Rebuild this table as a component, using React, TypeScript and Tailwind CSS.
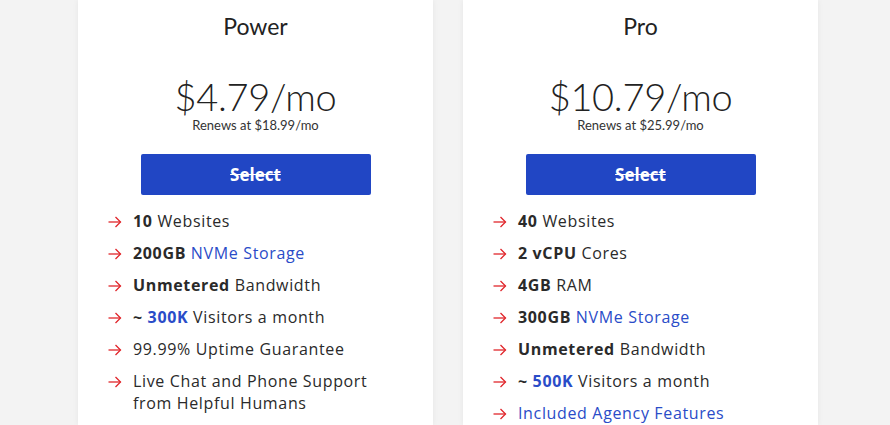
import React from "react";

type Feat = { parts: { t: string; b?: boolean; blue?: boolean }[] };

const Arrow = () => (
  <svg width="14" height="12" viewBox="0 0 14 12" className="mt-[6px] shrink-0" fill="none" stroke="#e0262b" strokeWidth="1.3">
    <path d="M0.5 6 H12.5" />
    <path d="M7.5 1 L12.5 6 L7.5 11" />
  </svg>
);

const power: Feat[] = [
  { parts: [{ t: "10", b: true }, { t: " Websites" }] },
  { parts: [{ t: "200GB", b: true }, { t: " " }, { t: "NVMe Storage", blue: true }] },
  { parts: [{ t: "Unmetered", b: true }, { t: " Bandwidth" }] },
  { parts: [{ t: "~ ", b: true }, { t: "300K", b: true, blue: true }, { t: " Visitors a month" }] },
  { parts: [{ t: "99.99% Uptime Guarantee" }] },
  { parts: [{ t: "Live Chat and Phone Support from Helpful Humans" }] },
];

const pro: Feat[] = [
  { parts: [{ t: "40", b: true }, { t: " Websites" }] },
  { parts: [{ t: "2 vCPU", b: true }, { t: " Cores" }] },
  { parts: [{ t: "4GB", b: true }, { t: " RAM" }] },
  { parts: [{ t: "300GB", b: true }, { t: " " }, { t: "NVMe Storage", blue: true }] },
  { parts: [{ t: "Unmetered", b: true }, { t: " Bandwidth" }] },
  { parts: [{ t: "~ ", b: true }, { t: "500K", b: true, blue: true }, { t: " Visitors a month" }] },
  { parts: [{ t: "Included Agency Features", blue: true }] },
];

function Card({ name, price, renew, feats }: { name: string; price: string; renew: string; feats: Feat[] }) {
  return (
    <div className="w-[355px] shrink-0 bg-white shadow-[0_0_6px_rgba(0,0,0,0.06)] flex flex-col items-center pt-[12px]">
      <div className="text-[23px] leading-[28px] text-[#222] font-['Lato',sans-serif]">{name}</div>
      <div className="mt-[38px] text-[38px] leading-[36px] font-light text-[#222] font-['Lato',sans-serif] tracking-[-0.3px]">
        {price}
        <span>/mo</span>
      </div>
      <div className="mt-[4px] text-[13px] leading-[15px] text-[#333] font-['Lato',sans-serif]">Renews at {renew}/mo</div>
      <button className="mt-[21px] w-[230px] h-[41px] rounded-[2px] bg-[#2146c4] text-white font-bold text-[17px] line-through font-['Open_Sans',sans-serif]">
        Select
      </button>
      <ul className="mt-[15px] w-[355px] pl-[30px] pr-[30px] flex flex-col gap-[10px] font-['Open_Sans',sans-serif] text-[16px] leading-[22px] text-[#2a2a2a] tracking-[0.65px]">
        {feats.map((f, i) => (
          <li key={i} className="flex gap-[11px]">
            <Arrow />
            <span className="max-w-[250px]">
              {f.parts.map((p, j) => (
                <span key={j} className={(p.b ? "font-bold " : "") + (p.blue ? "text-[#2a4cc8]" : "")}>
                  {p.t}
                </span>
              ))}
            </span>
          </li>
        ))}
      </ul>
    </div>
  );
}

export default function App() {
  return (
    <div className="w-[890px] h-[425px] overflow-hidden bg-[#f3f3f3] flex gap-[30px] pl-[78px]">
      <Card name="Power" price="$4.79" renew="$18.99" feats={power} />
      <Card name="Pro" price="$10.79" renew="$25.99" feats={pro} />
    </div>
  );
}
